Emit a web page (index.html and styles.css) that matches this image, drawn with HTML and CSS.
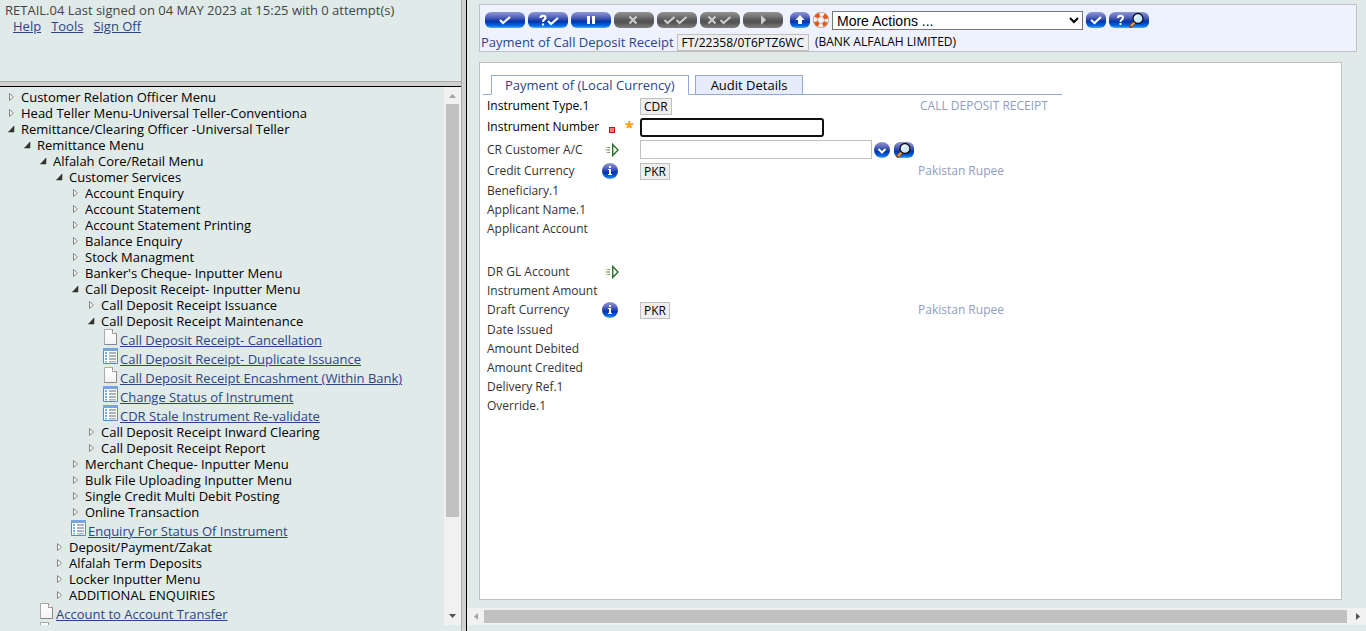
FILE: index.html
```
<!DOCTYPE html>
<html lang="en">
<head>
<meta charset="utf-8">
<title>Payment of Call Deposit Receipt</title>
<link rel="stylesheet" href="styles.css">
</head>
<body>
<svg class="sprite" width="0" height="0" aria-hidden="true">
  <defs>
    <linearGradient id="blue" x1="0" y1="0" x2="0" y2="1">
      <stop offset="0" stop-color="#9098d4"/><stop offset=".3" stop-color="#5a68bc"/>
      <stop offset=".48" stop-color="#2c48ac"/><stop offset=".6" stop-color="#0034b0"/>
      <stop offset=".85" stop-color="#0068e4"/><stop offset="1" stop-color="#58a8f4"/>
    </linearGradient>
    <linearGradient id="gray" x1="0" y1="0" x2="0" y2="1">
      <stop offset="0" stop-color="#929292"/><stop offset=".3" stop-color="#727272"/>
      <stop offset=".5" stop-color="#585858"/><stop offset=".65" stop-color="#525252"/>
      <stop offset="1" stop-color="#808080"/>
    </linearGradient>
    <linearGradient id="paper" x1="0" y1="0" x2="0" y2="1">
      <stop offset="0" stop-color="#fff"/><stop offset="1" stop-color="#f2f2f2"/>
    </linearGradient>
  </defs>
  <symbol id="closed" viewBox="0 0 8 10"><path d="M1.500 1.500v7L5.500 5z" fill="#fff" stroke="#858585"/></symbol>
  <symbol id="open" viewBox="0 0 8 10"><path d="M6 2V8H.5z" fill="#333" stroke="#333" stroke-width=".6"/></symbol>
  <symbol id="page" viewBox="0 0 16 16"><path d="M1.500.5h8l4 4v11h-12z" fill="url(#paper)" stroke="#aaa"/><path d="M1.500 15.500h12V4.500" fill="none" stroke="#888"/><path d="M9.500.5v4h4" fill="#fff" stroke="#999"/></symbol>
  <symbol id="list" viewBox="0 0 16 16"><path d="M.5.500h14v15H.5z" fill="#fff" stroke="#5b87c5"/><path d="M0 0h15v3H0z" fill="#78a3dc"/><path d="M2 4h2v2H2zm0 3h2v2H2zm0 3h2v2H2zm0 3h2v1.500H2z" fill="#64b4f0"/><path d="M6 4h7v2H6zm0 3h7v2H6zm0 3h7v2H6zm0 3h7v1.500H6z" fill="#b2b2b2"/></symbol>
  <symbol id="lens" viewBox="0 0 16 16"><path d="M6 10l-4 4" stroke="#803c10" stroke-width="3.600" stroke-linecap="round"/><path d="M6 10l-4 4" stroke="#f0a060" stroke-width="2"/><circle cx="9" cy="6.500" r="5" fill="#cfeafa" stroke="#111" stroke-width="1.300"/><path d="M6 6.500a3 3 0 0 1 3-3" fill="none" stroke="#fff" stroke-width="1.400"/></symbol>
  <symbol id="go" viewBox="0 0 16 14"><path d="M2 4.500h4M1 7h5M2 9.500h4" stroke="#b4c49c"/><path d="M4 4.500h2M3 7h3M4 9.500h2" stroke="#7c9c68"/><path d="M8.700 1.500v11L14 7z" fill="#fff" stroke="#26702a" stroke-width="1.400"/></symbol>
  <symbol id="info" viewBox="0 0 16 16"><circle cx="8" cy="8" r="8" fill="url(#blue)"/><path d="M7 3h2v2H7zM6 6h3v5h1v1H6v-1h1V7H6z" fill="#fff"/></symbol>
</svg>

<div class="frames">
  <div class="side">
    <header class="banner">
      <div>RETAIL.04 Last signed on 04 MAY 2023 at 15:25 with 0 attempt(s)</div>
      <nav class="banner-links"><a href="#">Help</a><a href="#">Tools</a><a href="#">Sign Off</a></nav>
    </header>
    <div class="split-h"></div>
    <div class="menu">
      <nav class="tree">
        <ul>
          <li><span class="node"><svg><use href="#closed"/></svg>Customer Relation Officer Menu</span></li>
          <li><span class="node"><svg><use href="#closed"/></svg>Head Teller Menu-Universal Teller-Conventiona</span></li>
          <li><span class="node"><svg><use href="#open"/></svg>Remittance/Clearing Officer -Universal Teller</span>
            <ul>
              <li><span class="node"><svg><use href="#open"/></svg>Remittance Menu</span>
                <ul>
                  <li><span class="node"><svg><use href="#open"/></svg>Alfalah Core/Retail Menu</span>
                    <ul>
                      <li><span class="node"><svg><use href="#open"/></svg>Customer Services</span>
                        <ul>
                          <li><span class="node"><svg><use href="#closed"/></svg>Account Enquiry</span></li>
                          <li><span class="node"><svg><use href="#closed"/></svg>Account Statement</span></li>
                          <li><span class="node"><svg><use href="#closed"/></svg>Account Statement Printing</span></li>
                          <li><span class="node"><svg><use href="#closed"/></svg>Balance Enquiry</span></li>
                          <li><span class="node"><svg><use href="#closed"/></svg>Stock Managment</span></li>
                          <li><span class="node"><svg><use href="#closed"/></svg>Banker's Cheque- Inputter Menu</span></li>
                          <li><span class="node"><svg><use href="#open"/></svg>Call Deposit Receipt- Inputter Menu</span>
                            <ul>
                              <li><span class="node"><svg><use href="#closed"/></svg>Call Deposit Receipt Issuance</span></li>
                              <li><span class="node"><svg><use href="#open"/></svg>Call Deposit Receipt Maintenance</span>
                                <ul>
                                  <li class="leaf"><svg><use href="#page"/></svg><a href="#">Call Deposit Receipt- Cancellation</a></li>
                                  <li class="leaf"><svg><use href="#list"/></svg><a href="#">Call Deposit Receipt- Duplicate Issuance</a></li>
                                  <li class="leaf"><svg><use href="#page"/></svg><a href="#">Call Deposit Receipt Encashment (Within Bank)</a></li>
                                  <li class="leaf"><svg><use href="#list"/></svg><a href="#">Change Status of Instrument</a></li>
                                  <li class="leaf"><svg><use href="#list"/></svg><a href="#">CDR Stale Instrument Re-validate</a></li>
                                </ul>
                              </li>
                              <li><span class="node"><svg><use href="#closed"/></svg>Call Deposit Receipt Inward Clearing</span></li>
                              <li><span class="node"><svg><use href="#closed"/></svg>Call Deposit Receipt Report</span></li>
                            </ul>
                          </li>
                          <li><span class="node"><svg><use href="#closed"/></svg>Merchant Cheque- Inputter Menu</span></li>
                          <li><span class="node"><svg><use href="#closed"/></svg>Bulk File Uploading Inputter Menu</span></li>
                          <li><span class="node"><svg><use href="#closed"/></svg>Single Credit Multi Debit Posting</span></li>
                          <li><span class="node"><svg><use href="#closed"/></svg>Online Transaction</span></li>
                          <li class="leaf"><svg><use href="#list"/></svg><a href="#">Enquiry For Status Of Instrument</a></li>
                        </ul>
                      </li>
                      <li><span class="node"><svg><use href="#closed"/></svg>Deposit/Payment/Zakat</span></li>
                      <li><span class="node"><svg><use href="#closed"/></svg>Alfalah Term Deposits</span></li>
                      <li><span class="node"><svg><use href="#closed"/></svg>Locker Inputter Menu</span></li>
                      <li><span class="node"><svg><use href="#closed"/></svg>ADDITIONAL ENQUIRIES</span></li>
                    </ul>
                  </li>
                  <li class="leaf"><svg><use href="#page"/></svg><a href="#">Account to Account Transfer</a></li>
                  <li class="leaf"><svg><use href="#page"/></svg></li>
                </ul>
              </li>
            </ul>
          </li>
        </ul>
      </nav>
      <div class="bar bar-v">
        <svg class="cap" viewBox="0 0 17 17"><path d="M5 11l3.500-4L12 11z" fill="#a3a3a3"/></svg>
        <div class="track-v"><div class="thumb-v"></div></div>
        <svg class="cap" viewBox="0 0 17 17"><path d="M5 6l3.500 4L12 6z" fill="#505050"/></svg>
      </div>
    </div>
  </div>
  <div class="split-v"></div>
  <main class="work">
    <form class="content">
      <section class="toolbar">
        <div class="actions">
          <button type="button" class="pill" aria-label="Commit"><svg viewBox="0 0 40 16"><rect width="40" height="16" rx="6" fill="url(#blue)"/><path d="M15 8l3 3 7-6" fill="none" stroke="#fff" stroke-width="2.200"/></svg></button>
          <button type="button" class="pill" aria-label="Validate"><svg viewBox="0 0 40 16"><rect width="40" height="16" rx="6" fill="url(#blue)"/><path d="M12.500 6c0-3 5-3 5 0 0 1.500-2.500 1.500-2.500 4M15 11.500v2M20 9l3 3 7-6" fill="none" stroke="#fff" stroke-width="2.200"/></svg></button>
          <button type="button" class="pill" aria-label="Hold"><svg viewBox="0 0 40 16"><rect width="40" height="16" rx="6" fill="url(#blue)"/><path d="M16 4h3v8h-3zm5 0h3v8h-3z" fill="#fff"/></svg></button>
          <button type="button" class="pill" disabled aria-label="Delete"><svg viewBox="0 0 40 16"><rect width="40" height="16" rx="6" fill="url(#gray)"/><path d="M15.500 4.500l7 7m0-7l-7 7" stroke="#ccc" stroke-width="2.200"/></svg></button>
          <button type="button" class="pill" disabled aria-label="Authorise"><svg viewBox="0 0 40 16"><rect width="40" height="16" rx="6" fill="url(#gray)"/><path d="M7.500 8l3 3 7-6M19.500 8l3 3 7-6" fill="none" stroke="#ccc" stroke-width="2.200"/></svg></button>
          <button type="button" class="pill" disabled aria-label="Reverse"><svg viewBox="0 0 40 16"><rect width="40" height="16" rx="6" fill="url(#gray)"/><path d="M8.500 4.500l7 7m0-7l-7 7M20.500 8l3 3 7-6" fill="none" stroke="#ccc" stroke-width="2.200"/></svg></button>
          <button type="button" class="pill" disabled aria-label="Next"><svg viewBox="0 0 40 16"><rect width="40" height="16" rx="6" fill="url(#gray)"/><path d="M18 3l5 5-5 5z" fill="#ccc"/></svg></button>
          <button type="button" class="small up" aria-label="Return"><svg viewBox="0 0 20 16"><rect width="20" height="16" rx="6" fill="url(#blue)"/><path d="M10 3l4.500 5H12v4H8V8H5.500z" fill="#fff"/></svg></button>
          <button type="button" class="small ring" aria-label="Help"><svg viewBox="0 0 16 16"><circle cx="8" cy="8" r="5.500" fill="none" stroke="#a08878" stroke-width="5"/><circle cx="8" cy="8" r="5.500" fill="none" stroke="#f2eee8" stroke-width="4"/><circle cx="8" cy="8" r="5.500" fill="none" stroke="#e4581c" stroke-width="4" stroke-dasharray="4.320 4.320" stroke-dashoffset="-2.160"/></svg></button>
          <select class="more" aria-label="More actions"><option>More Actions ...</option></select>
          <button type="button" class="small" aria-label="Go"><svg viewBox="0 0 20 16"><rect width="20" height="16" rx="6" fill="url(#blue)"/><path d="M5 8l3.500 3L15 5" fill="none" stroke="#fff" stroke-width="2.200"/></svg></button>
          <button type="button" class="pill" aria-label="Find"><svg viewBox="0 0 40 16"><rect width="40" height="16" rx="6" fill="url(#blue)"/><path d="M9 6c0-3 5-3 5 0 0 1.500-2.500 1.500-2.500 4M11.500 11v2" fill="none" stroke="#fff" stroke-width="2"/><use href="#lens" x="20" y="0" width="16" height="16"/></svg></button>
        </div>
        <div class="record"><span class="record-title">Payment of Call Deposit Receipt</span><span class="chip">FT/22358/0T6PTZ6WC</span><span class="record-note">(BANK ALFALAH LIMITED)</span></div>
      </section>
      <section class="panel">
        <div class="tabs"><a class="tab current" href="#">Payment of (Local Currency)</a><a class="tab" href="#">Audit Details</a></div>
        <div class="fields">
          <div class="field key"><span>Instrument Type.1</span><span></span><span class="value"><span class="chip">CDR</span></span><span class="note caps">CALL DEPOSIT RECEIPT</span></div>
          <div class="field key entry"><label for="number">Instrument Number</label><span class="marks"><i class="square"></i><b class="star">*</b></span><span class="value"><input id="number" class="focused" type="text" autofocus></span></div>
          <div class="field entry"><label for="customer">CR Customer A/C</label><span><svg class="go"><use href="#go"/></svg></span><span class="value"><input id="customer" class="account" type="text"><button type="button" class="round" aria-label="Drop down"><svg viewBox="0 0 16 16"><circle cx="8" cy="8" r="8" fill="url(#blue)"/><path d="M4.500 7L8 10.500 11.500 7" fill="none" stroke="#fff" stroke-width="2"/></svg></button><button type="button" class="small" aria-label="Search"><svg viewBox="0 0 20 16"><rect width="20" height="16" rx="6" fill="url(#blue)"/><use href="#lens" x="2" y="0" width="16" height="16"/></svg></button></span></div>
          <div class="field"><span>Credit Currency</span><span><svg class="info"><use href="#info"/></svg></span><span class="value"><span class="chip">PKR</span></span><span class="note">Pakistan Rupee</span></div>
          <div class="field"><span>Beneficiary.1</span></div>
          <div class="field"><span>Applicant Name.1</span></div>
          <div class="field"><span>Applicant Account</span></div>
          <div class="field gap"></div>
          <div class="field"><span>DR GL Account</span><span><svg class="go"><use href="#go"/></svg></span></div>
          <div class="field"><span>Instrument Amount</span></div>
          <div class="field"><span>Draft Currency</span><span><svg class="info"><use href="#info"/></svg></span><span class="value"><span class="chip">PKR</span></span><span class="note">Pakistan Rupee</span></div>
          <div class="field"><span>Date Issued</span></div>
          <div class="field"><span>Amount Debited</span></div>
          <div class="field"><span>Amount Credited</span></div>
          <div class="field"><span>Delivery Ref.1</span></div>
          <div class="field"><span>Override.1</span></div>
        </div>
      </section>
    </form>
    <div class="bar bar-h">
      <svg class="cap" viewBox="0 0 17 17"><path d="M11 5L7 8.500 11 12z" fill="#a3a3a3"/></svg>
      <div class="thumb-h"></div>
      <svg class="cap" viewBox="0 0 17 17"><path d="M7 5l4 3.500L7 12z" fill="#505050"/></svg>
    </div>
  </main>
</div>
</body>
</html>
```

FILE: styles.css
```
* { box-sizing: border-box; }
body { margin: 0; background: #e0eae8; color: #000; font: 13px/16px "Open Sans", "Noto Sans", sans-serif; }
ul { margin: 0; padding: 0; list-style: none; }
svg { display: block; flex: none; }
a { color: #2c4487; }
button { padding: 0; border: 0; background: none; flex: none; }
.sprite { position: absolute; }

.frames { display: grid; grid-template-columns: 461fr 6px 899fr; height: 100vh; overflow: hidden; }
.split-v { background: #d0d0d0; border-left: 1px solid #a9a9a9; border-right: 1px solid #000; }
.split-h { height: 6px; flex: none; background: #d0d0d0; border-top: 1px solid #a9a9a9; border-bottom: 1px solid #000; }

.side { display: flex; flex-direction: column; min-width: 0; min-height: 0; padding-bottom: 6px; white-space: nowrap; }
.banner { height: 81px; flex: none; padding: 2px 5px; color: #444; }
.banner-links { display: flex; gap: 10px; padding-left: 8px; }
.menu { display: flex; flex: 1; min-height: 0; }
.tree { flex: 1; min-width: 0; padding: 2px 0 0 5px; overflow: hidden; }
.tree ul ul { padding-left: 16px; }
.node { display: flex; align-items: center; height: 16px; }
.node svg { width: 8px; height: 10px; margin: 0 5px 0 3px; }
.leaf { display: flex; align-items: flex-start; height: 19px; }
.leaf svg { width: 16px; height: 16px; margin-left: 2px; margin-right: 1px; }
.leaf a { padding-top: 3px; }

.bar { display: flex; flex: none; background: #f1f1f1; }
.bar-v { width: 17px; flex-direction: column; }
.cap { width: 17px; height: 17px; }
.track-v { flex: 1; padding: 0 2px; }
.thumb-v { height: 82%; background: #c1c1c1; }
.bar-h { height: 17px; align-items: center; }
.thumb-h { flex: 1; height: 13px; margin-right: 2px; background: #c1c1c1; }

.work { display: flex; flex-direction: column; min-width: 0; min-height: 0; padding-bottom: 6px; }
.content { display: flex; flex-direction: column; flex: 1; gap: 10px; min-height: 0; padding: 4px 9px 8px 12px; }
.toolbar { padding: 5px 5px 0 1px; height: 48px; flex: none; border: 1px solid #c0c0c0; background: #eef2ff; }
.actions { display: flex; align-items: center; height: 20px; gap: 3px; padding-left: 4px; }
.actions svg, .pill { width: 40px; height: 16px; }
.small, .actions .small svg, .small svg { width: 20px; height: 16px; }
.actions .ring, .actions .ring svg { width: 16px; }
.up { margin-left: 4px; }
.more { width: 251px; height: 19px; flex: none; padding: 0; border: 1px solid #767676; background-color: #fff; color: #000; font: 14px "Liberation Sans", Arial, sans-serif; }
.record { display: flex; align-items: center; height: 24px; font-size: 12px; white-space: nowrap; }
.record-title { color: #2c4487; margin-right: 3px; font-size: 13px; }
.record-note { margin-left: 6px; }
.chip { display: inline-block; height: 17px; padding: 0 3px; border: 1px solid #c0c0c0; background: #eee; color: #000; font-size: 12px; line-height: 15px; }
.record .chip { padding: 0 4px; }

.panel { flex: 1; min-height: 0; margin-right: 15px; padding: 12px 3px; border: 1px solid #c0c0c0; background: #fff; white-space: nowrap; }
.tabs { display: flex; width: 579px; height: 20px; padding-left: 8px; gap: 6px; border-bottom: 1px solid #8fa9d8; }
.tab { height: 20px; padding: 1px 15px 0; border: 1px solid #8fa9d8; background: #e6ecfb; color: #000; text-decoration: none; line-height: 17px; }
.tab.current { border-bottom-color: #fff; background: #fff; color: #2c4487; padding: 1px 13px 0; }
.fields { padding: 1px 0 0 4px; color: #333; font-size: 12px; }
.field { display: grid; grid-template-columns: 115px 38px 278px 1fr; align-items: center; height: 19px; }
.field.key { color: #000; }
.field:has(.chip) { height: 20px; }
.field.entry { height: 23px; }
.field.key.entry { height: 22px; }
.field.gap { height: 24px; }
.marks { display: flex; align-items: center; gap: 10px; padding-left: 7px; }
.square { width: 6px; height: 6px; margin-top: 5px; border: 1px solid #d01010; background: #f08080; }
.star { color: #f90; font-size: 16px; }
.value { display: flex; align-items: center; gap: 2px; }
.value input { width: 184px; height: 19px; padding: 0 2px; border: 1px solid #c0c0c0; background: #fff; font: inherit; }
.value .account { width: 232px; }
.value .focused { border: 2px solid #101010; border-radius: 3px; outline: 0; }
.round, .round svg { width: 16px; height: 16px; }
.round { margin-right: 2px; }
.go { width: 16px; height: 14px; margin-left: 2px; }
.info { width: 16px; height: 16px; }
.note { color: #8f9dc0; }
.note.caps { padding-left: 2px; }
```
